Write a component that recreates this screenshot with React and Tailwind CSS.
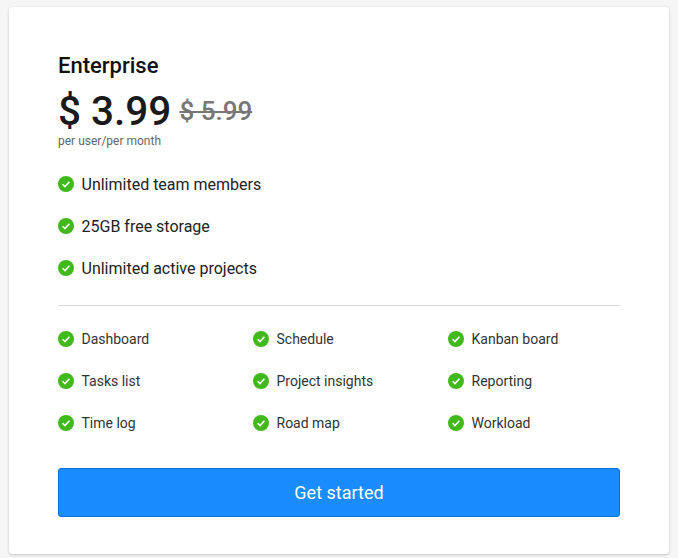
const mainFeatures = ["Unlimited team members", "25GB free storage", "Unlimited active projects"];
const moreFeatures = [
  "Dashboard", "Schedule", "Kanban board",
  "Tasks list", "Project insights", "Reporting",
  "Time log", "Road map", "Workload",
];

function Check() {
  return (
    <svg width="16" height="16" viewBox="0 0 16 16" className="shrink-0">
      <circle cx="8" cy="8" r="8" fill="#41b81c" />
      <path d="M4.6 8.2 7 10.6 11.4 5.8" fill="none" stroke="#fff" strokeWidth="1.6" />
    </svg>
  );
}

export default function App() {
  return (
    <div className="h-[558px] w-[678px] overflow-hidden bg-[#f6f6f6] pl-[9px] pt-[7px] font-['Roboto',sans-serif]">
      <div className="h-[547px] w-[660px] rounded-sm bg-white pl-[49px] pr-[49px] pt-[45px] shadow-[0_1px_3px_rgba(0,0,0,0.22)]">
        <h2 className="text-[22px] leading-[28px] font-medium text-[#111]">Enterprise</h2>

        <div className="mt-[10px] flex items-center gap-[8px]">
          <span className="text-[40.5px] leading-[42px] font-medium text-[#1a1a1a]">$ 3.99</span>
          <span className="text-[26px] leading-[32px] font-medium text-[#777] line-through">$ 5.99</span>
        </div>
        <p className="text-xs leading-[18px] font-normal text-[#666]">per user/per month</p>

        <ul className="mt-[23px] flex flex-col gap-[18px]">
          {mainFeatures.map((f) => (
            <li key={f} className="flex h-[24px] items-center gap-[7.5px] text-base text-[#222]">
              <span className="mb-[2px] flex">
                <Check />
              </span>
              {f}
            </li>
          ))}
        </ul>

        <div className="mt-[24px] h-px bg-[#d9d9d9]" />

        <ul className="mt-[22px] grid grid-cols-[195px_195px_1fr] gap-y-[20px]">
          {moreFeatures.map((f) => (
            <li key={f} className="flex h-[22px] items-center gap-[7.5px] text-sm text-[#333]">
              <Check />
              {f}
            </li>
          ))}
        </ul>

        <button className="mt-[34px] h-[49px] w-full rounded-[3px] border border-[#0a6fd8] bg-[#1a8cff] text-lg text-white">
          Get started
        </button>
      </div>
    </div>
  );
}
